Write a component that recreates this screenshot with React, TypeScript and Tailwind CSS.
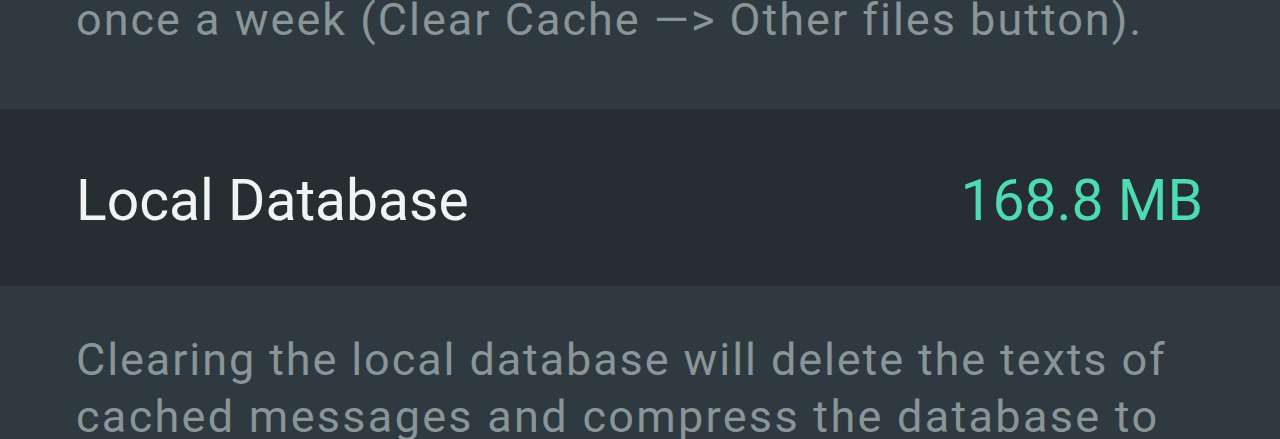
export default function App() {
  return (
    <div className="w-[1280px] h-[439px] overflow-hidden bg-[#2e3a40]" style={{ fontFamily: "Roboto, 'Noto Sans', sans-serif" }}>
      <div className="px-[76px] pb-[61px] mt-[-9px]">
        <p className="text-[45px] leading-[57px] text-[#8a9597] whitespace-nowrap tracking-[2px]">once a week (Clear Cache —&gt; Other files button).</p>
      </div>
      <div className="h-[177px] bg-[#262e31] flex items-center justify-between pl-[76px] pr-[77px] pt-[6px]">
        <span className="text-[57px] text-[#f2f4f4] leading-none">Local Database</span>
        <span className="text-[57px] text-[#4ddbb6] leading-none">168.8 MB</span>
      </div>
      <div className="px-[76px] pt-[45px]">
        <p className="text-[45px] leading-[57px] text-[#8a9597] whitespace-nowrap tracking-[1.9px]">Clearing the local database will delete the texts of</p>
        <p className="text-[45px] leading-[57px] text-[#8a9597] whitespace-nowrap tracking-[2.3px]">cached messages and compress the database to</p>
      </div>
    </div>
  );
}
